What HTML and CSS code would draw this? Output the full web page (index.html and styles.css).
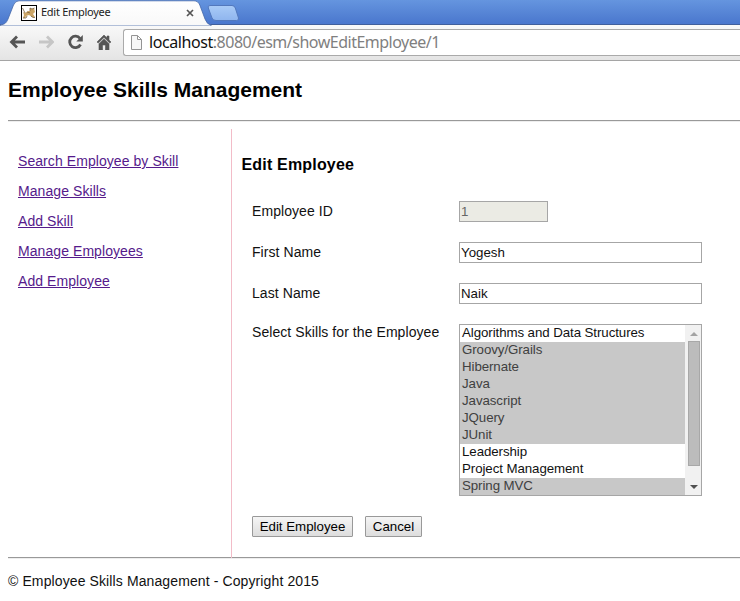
FILE: index.html
```html
<!DOCTYPE html>
<html lang="en">
<head>
<meta charset="utf-8">
<title>Edit Employee</title>
<link rel="stylesheet" href="styles.css">
</head>
<body>
<header class="chrome">
  <div class="tabstrip">
    <svg class="tab-shapes" width="250" height="26" viewBox="0 0 250 26">
      <defs>
        <linearGradient id="tab" x1="0" y1="0" x2="0" y2="1"><stop offset="0" stop-color="#fff"/><stop offset="1" stop-color="#f8f8f8"/></linearGradient>
        <linearGradient id="newtab" x1="0" y1="0" x2="0" y2="1"><stop offset="0" stop-color="#a9cbf7"/><stop offset="1" stop-color="#8fb5ee"/></linearGradient>
      </defs>
      <path d="M0 25C5 24.500 6.500 22.500 8 19L13.500 5Q15.300.800 19 .800H194Q198 .800 199.800 5L205 19Q207 24.500 211 25V26H0Z" fill="url(#tab)" stroke="#4467a8" stroke-width=".8"/>
      <path d="M210 5.500H232Q234.500 5.500 235.300 8L238.500 18Q239 20.500 236.500 20.500H216Q213 20.500 212 18L208.300 8Q207.500 5.500 210 5.500Z" fill="url(#newtab)" stroke="#5278bd"/>
    </svg>
    <div class="tab">
      <svg class="favicon" width="16" height="16" viewBox="0 0 16 16">
        <rect x=".5" y=".5" width="15" height="15" fill="#fff" stroke="#000"/>
        <path d="M2 7L4 8L7 6L9 6L9 3L11 4L13 3L14 7L12 9L14 12H11L8 10L5 11L4 13H2L3 10Z" fill="#cba566"/>
        <path d="M1.500 3L4 8M9 6L9 3L11 4L13.500 3M2 13H5L6 11M10 11L12 12.500H14M6 7L9 8" stroke="#77603f" stroke-width=".8" fill="none"/>
      </svg>
      <span class="tab-title">Edit Employee</span>
      <svg class="close" width="8" height="8" viewBox="0 0 8 8"><path d="M1 1L7 7M7 1L1 7" stroke="#555" stroke-width="1.700"/></svg>
    </div>
  </div>
  <div class="toolbar">
    <svg width="16" height="14" viewBox="0 0 16 14"><path d="M16 7H2.500M8 1.500L2.500 7L8 12.500" fill="none" stroke="#555" stroke-width="2.800"/></svg>
    <svg width="16" height="14" viewBox="0 0 16 14"><path d="M1 7H14.500M9 1.500L14.500 7L9 12.500" fill="none" stroke="#c6c6c6" stroke-width="2.800"/></svg>
    <svg width="16" height="16" viewBox="0 0 16 16"><path d="M13 4.500A5.700 5.700 0 1 0 13.500 10.500" fill="none" stroke="#555" stroke-width="2.800"/><path d="M15.800 1V7.500H9.300Z" fill="#555"/></svg>
    <svg class="home" width="14" height="15" viewBox="0 0 14 15"><path d="M7 0L14 7L12.800 8L7 2.500L1.200 8L0 7ZM10 1H12V5L10 3ZM7 4L12 8.700V15H8.500V10H5.500V15H2V8.700Z" fill="#555" stroke="#555" stroke-width=".6"/></svg>
    <div class="omnibox">
      <svg width="11" height="15" viewBox="0 0 11 15"><path d="M.5.5H6.500L10.500 4.500V14.500H.5ZM6.500.5V4.500H10.500" fill="#f7f7f7" stroke="#949494"/></svg>
      <span class="url"><b>localhost</b>:8080/esm/showEditEmployee/1</span>
    </div>
  </div>
</header>
<div class="page">
  <h1>Employee Skills Management</h1>
  <hr>
  <div class="columns">
    <nav>
      <a href="#">Search Employee by Skill</a>
      <a href="#">Manage Skills</a>
      <a href="#">Add Skill</a>
      <a href="#">Manage Employees</a>
      <a href="#">Add Employee</a>
    </nav>
    <main>
      <h2>Edit Employee</h2>
      <form>
        <label>Employee ID</label><div class="field id">1</div>
        <label>First Name</label><div class="field">Yogesh</div>
        <label>Last Name</label><div class="field">Naik</div>
        <label class="list-label">Select Skills for the Employee</label>
        <div class="list">
          <ul>
            <li>Algorithms and Data Structures</li>
            <li class="on">Groovy/Grails</li>
            <li class="on">Hibernate</li>
            <li class="on">Java</li>
            <li class="on">Javascript</li>
            <li class="on">JQuery</li>
            <li class="on">JUnit</li>
            <li>Leadership</li>
            <li>Project Management</li>
            <li class="on">Spring MVC</li>
          </ul>
          <div class="scroll">
            <svg width="8" height="4" viewBox="0 0 8 4"><path d="M0 4L4 0L8 4Z" fill="#a3a3a3"/></svg>
            <div class="thumb"></div>
            <svg class="down" width="8" height="4" viewBox="0 0 8 4"><path d="M0 0H8L4 4Z" fill="#505050"/></svg>
          </div>
        </div>
      </form>
      <div class="buttons"><button class="save">Edit Employee</button><button class="cancel">Cancel</button></div>
    </main>
  </div>
  <hr>
  <footer>© Employee Skills Management - Copyright 2015</footer>
</div>
</body>
</html>
```
FILE: styles.css
```css
* { box-sizing: border-box; }
html { overflow: hidden; }
body { margin: 0; background: #fff; color: #111; font: 14px/18px "Liberation Sans", Arial, sans-serif; overflow: hidden; }
svg { display: block; flex: none; }
.chrome { height: 61px; }
.tabstrip { height: 25px; position: relative; background: linear-gradient(#6595df, #4b78ce 23px); border-bottom: 1px solid #405f9c; }
.tab-shapes { position: absolute; left: 0; top: 0; }
.tab { position: relative; display: flex; align-items: center; height: 25px; padding-left: 21px; width: 194px; }
.tab-title { font: 11px/16px "Noto Sans", sans-serif; letter-spacing: -.28px; margin: -1px 0 0 4px; color: #222; white-space: nowrap; }
.close { margin-left: auto; }
.toolbar { height: 36px; display: flex; align-items: center; padding: 0 0 1px 9px; gap: 13px; background: linear-gradient(#f9f9f9, #e4e4e4); border-bottom: 1px solid #a5a5a5; }
.home { margin-left: 1px; }
.omnibox { flex: 1; height: 27px; margin-left: -1px; border: 1px solid #aaa; border-right: 0; border-radius: 3px 0 0 3px; background: #fff; display: flex; align-items: center; padding-left: 7px; gap: 7px; }
.url { font: 16px/24px "Noto Sans", sans-serif; letter-spacing: -.5px; color: #808080; white-space: nowrap; }
.url b { font-weight: 400; letter-spacing: -.42px; color: #111; }
.page { padding-left: 8px; }
h1 { font-size: 21px; line-height: 24px; margin: 17px 0 18px; color: #000; }
hr { height: 2px; border: 0; border-top: 1px solid #999; border-bottom: 1px solid #eee; margin: 0; }
.columns { display: flex; height: 436px; padding-top: 7px; margin-bottom: -1px; }
nav { width: 224px; border-right: 1px solid #f2bcc8; padding: 23px 0 0 10px; display: flex; flex-direction: column; gap: 12px; letter-spacing: .07px; }
nav a { color: #551a8b; }
main { flex: 1; padding: 26px 0 0 10px; }
h2 { font-size: 16px; line-height: 20px; letter-spacing: .18px; margin: 0 0 0 -.5px; color: #000; }
form { display: grid; grid-template-columns: 207px 243px; row-gap: 20px; padding: 26px 0 0 10px; }
label { line-height: 20px; letter-spacing: .07px; white-space: nowrap; }
.list-label { line-height: 16px; }
.field { height: 21px; border: 1px solid #a6a6a6; padding-left: 1px; font-size: 13.3px; line-height: 19px; }
.id { width: 89px; background: #ebebe4; color: #666; }
.list { height: 172px; border: 1px solid #a6a6a6; display: flex; }
ul { list-style: none; margin: 0; padding: 0; flex: 1; }
li { height: 17px; line-height: 16px; padding-left: 2px; font-size: 13.3px; letter-spacing: -.08px; }
.on { background: #c8c8c8; color: #404040; }
.scroll { width: 16px; background: #f1f1f1; display: flex; flex-direction: column; align-items: center; padding: 7px 0 6px 1px; }
.thumb { width: 12px; height: 125px; margin-top: 5px; background: #bcbcbc; border: 1px solid #a8a8a8; }
.down { margin-top: auto; }
.buttons { display: flex; gap: 12px; padding: 20px 0 0 10px; }
button { height: 21px; padding: 0; border: 1px solid #999; border-radius: 1px; background: linear-gradient(#f5f5f5, #ddd); font: 13.3px/18px "Liberation Sans", Arial, sans-serif; color: #000; }
.save { width: 101px; }
.cancel { width: 57px; }
footer { margin-top: 13px; letter-spacing: .11px; }
```
